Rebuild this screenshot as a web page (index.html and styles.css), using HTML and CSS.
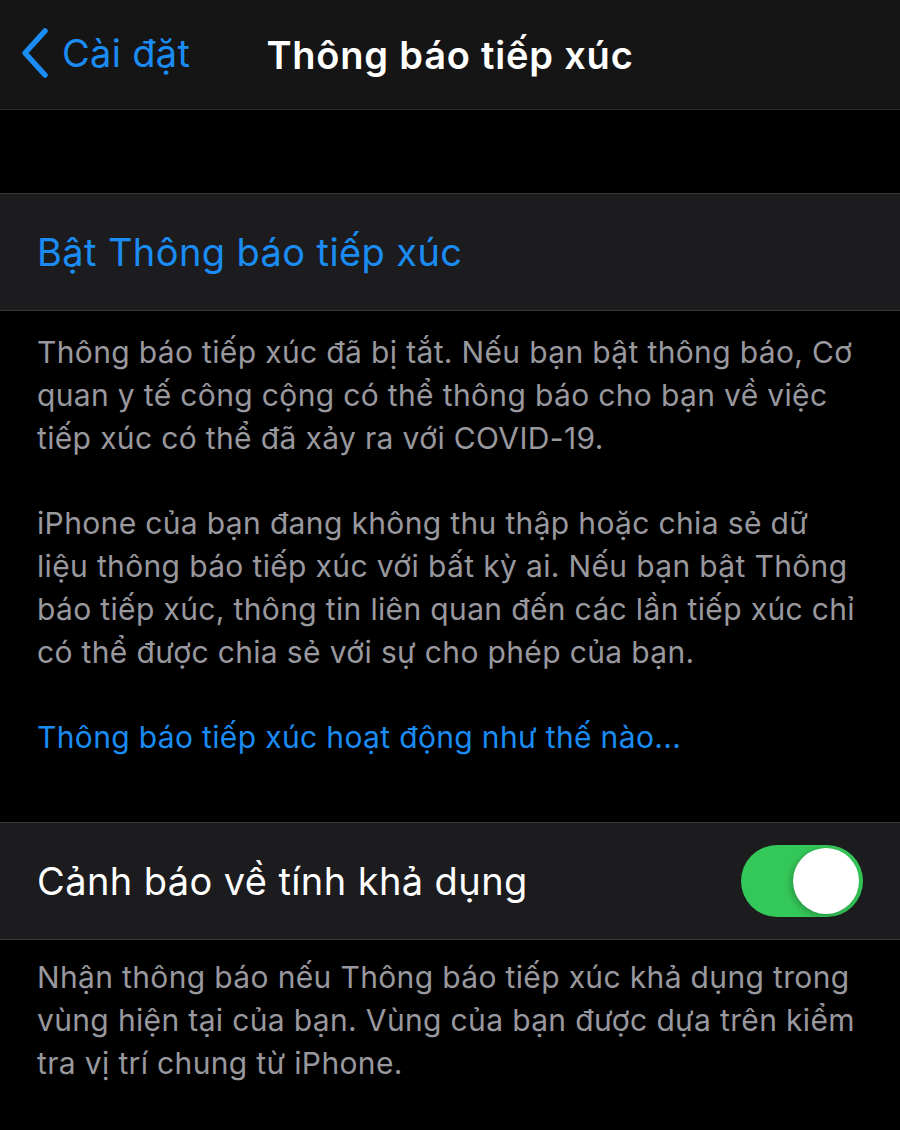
FILE: index.html
```html
<!DOCTYPE html>
<html lang="vi">
<head>
    <meta charset="UTF-8">
    <meta name="viewport" content="width=device-width, initial-scale=1.0">
    <title>Thông báo tiếp xúc</title>
    <link rel="stylesheet" href="styles.css">
</head>
<body>
<div class="navbar">
    <a class="back" href="#">
        <svg class="chevron" viewBox="0 0 30 52" width="30" height="52">
            <path d="M25 4 L5 26 L25 48" fill="none" stroke="#1a8cf4" stroke-width="5.5" stroke-linecap="round" stroke-linejoin="round"/>
        </svg>
        <span>Cài đặt</span>
    </a>
    <h1 class="title">Thông báo tiếp xúc</h1>
</div>

<div class="spacer"></div>

<div class="cell">
    <span class="cell-link">Bật Thông báo tiếp xúc</span>
</div>
<div class="footer first">
    <p>Thông báo tiếp xúc đã bị tắt. Nếu bạn bật thông báo, Cơ<br>quan y tế công cộng có thể thông báo cho bạn về việc<br>tiếp xúc có thể đã xảy ra với COVID-19.</p>
    <p>iPhone của bạn đang không thu thập hoặc chia sẻ dữ<br>liệu thông báo tiếp xúc với bất kỳ ai. Nếu bạn bật Thông<br>báo tiếp xúc, thông tin liên quan đến các lần tiếp xúc chỉ<br>có thể được chia sẻ với sự cho phép của bạn.</p>
    <p class="more">Thông báo tiếp xúc hoạt động như thế nào...</p>
</div>

<div class="cell">
    <span class="cell-label">Cảnh báo về tính khả dụng</span>
    <div class="switch on"><div class="knob"></div></div>
</div>
<div class="footer">
    <p>Nhận thông báo nếu Thông báo tiếp xúc khả dụng trong<br>vùng hiện tại của bạn. Vùng của bạn được dựa trên kiểm<br>tra vị trí chung từ iPhone.</p>
</div>
</body>
</html>
```

FILE: styles.css
```css
*{
    margin: 0px;
    padding: 0px;
    box-sizing: border-box;
}
body{
    background: #000;
    font-family: "Inter", "Roboto", sans-serif;
    color: #fff;
    width: 900px;
    height: 1130px;
    overflow: hidden;
}
.navbar{
    height: 110px;
    background: #151515;
    border-bottom: 1px solid #2c2c2e;
    display: flex;
    align-items: center;
    position: relative;
    padding-bottom: 4px;
}
.back{
    display: flex;
    align-items: center;
    color: #1a8cf4;
    text-decoration: none;
    font-size: 38px;
    letter-spacing: 0.3px;
    padding-left: 20px;
    gap: 12px;
}
.title{
    position: absolute;
    left: 0;
    right: 0;
    text-align: center;
    font-size: 38px;
    font-weight: 600;
    letter-spacing: 0.8px;
    pointer-events: none;
    top: 32px;
    line-height: 46px;
}
.spacer{
    height: 83px;
}
.cell{
    height: 118px;
    background: #1c1c1e;
    border-top: 1px solid #38383a;
    border-bottom: 1px solid #38383a;
    display: flex;
    align-items: center;
    justify-content: space-between;
    padding: 0 37px;
    font-size: 38px;
    letter-spacing: 0.4px;
    line-height: 46px;
}
.cell-link{
    color: #1a8cf4;
}
.switch{
    width: 122px;
    height: 72px;
    border-radius: 36px;
    background: #34c759;
    display: flex;
    align-items: center;
    justify-content: flex-end;
    padding: 3px 4px;
}
.knob{
    width: 66px;
    height: 66px;
    border-radius: 50%;
    background: #fff;
    box-shadow: -2px 2px 6px rgba(0,0,0,0.25);
}
.footer{
    padding: 16px 37px 0px;
    color: #98989e;
    font-size: 30px;
    letter-spacing: 0.35px;
    line-height: 43px;
}
.footer.first{
    padding-top: 20px;
    padding-bottom: 63px;
}
.footer p{
    margin-bottom: 42px;
    white-space: nowrap;
}
.footer p:last-child{
    margin-bottom: 0px;
}
.more{
    color: #1a8cf4;
}
```
